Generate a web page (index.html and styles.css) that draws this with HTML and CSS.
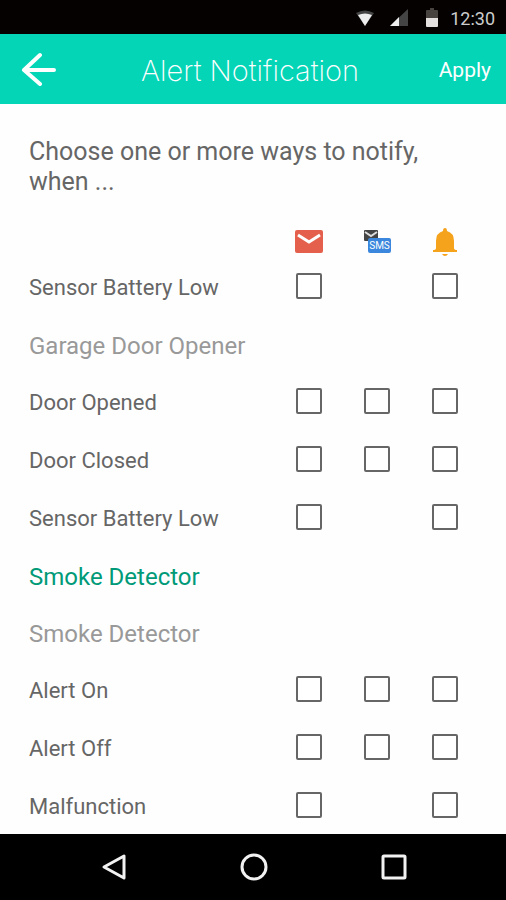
FILE: index.html
```html
<!DOCTYPE html>
<html lang="en">
<head>
<meta charset="utf-8">
<meta name="viewport" content="width=device-width, initial-scale=1">
<title>Alert Notification</title>
<link rel="stylesheet" href="styles.css">
</head>
<body>
<div class="status">
  <svg width="18" height="18" viewBox="0 0 18 18" aria-hidden="true"><path d="M0 4Q9-1 18 4L9 17z" fill="#444"/><path d="M2 6Q9 3 16 6L9 17z" fill="#eee"/></svg>
  <svg class="signal" width="18" height="18" viewBox="0 0 18 18" aria-hidden="true"><path d="M0 17L18 0V17z" fill="#444"/><path d="M0 17L9 8V17z" fill="#eee"/></svg>
  <svg class="battery" width="12" height="20" viewBox="0 0 12 20" aria-hidden="true"><path d="M4 0H8V2H11Q12 2 12 3V10H0V3Q0 2 1 2H4z" fill="#494340"/><path d="M0 10H12V18Q12 19 11 19H1Q0 19 0 18z" fill="#e4e0df"/></svg>
  <time>12:30</time>
</div>
<header class="bar">
  <button class="back" type="button" aria-label="Back"><svg width="36" height="34" viewBox="0 0 36 34" aria-hidden="true"><path d="M19 3L3 18L19 32M3 18H33" fill="none" stroke="#fff" stroke-width="4" stroke-linecap="round" stroke-linejoin="round"/></svg></button>
  <h1>Alert Notification</h1>
  <button class="apply" type="button">Apply</button>
</header>
<main>
  <p class="intro">Choose one or more ways to notify, when ...</p>
  <table>
    <thead>
      <tr>
        <td></td>
        <th class="way" scope="col" aria-label="Email"><svg width="28" height="24" viewBox="0 0 28 24" aria-hidden="true"><rect width="28" height="23" rx="2" fill="#e4604c"/><path d="M3 5L14 12L25 5" fill="none" stroke="#fff" stroke-width="3"/></svg></th>
        <th class="way" scope="col" aria-label="SMS"><svg width="28" height="24" viewBox="0 0 28 24" aria-hidden="true"><rect x="1" width="14" height="11" rx="1" fill="#444"/><path d="M2 2L8 6L14 2" fill="none" stroke="#ddd" stroke-width="2"/><rect x="5" y="8" width="23" height="15" rx="2" fill="#3b87dd"/><text class="sms" x="16.500" y="19" text-anchor="middle">SMS</text></svg></th>
        <th class="way" scope="col" aria-label="Push"><svg width="24" height="29" viewBox="0 0 24 29" aria-hidden="true"><path d="M12 0Q14 0 14 3Q21 5 21 13V20Q21 22 24 22V24H0V22Q3 22 3 20V13Q3 5 10 3Q10 0 12 0zM9 26H15Q14 28 12 28T9 26z" fill="#f5a21d"/></svg></th>
      </tr>
    </thead>
    <tbody>
      <tr><th scope="row">Sensor Battery Low</th><td><input type="checkbox" aria-label="Sensor Battery Low, email"></td><td></td><td><input type="checkbox" aria-label="Sensor Battery Low, push"></td></tr>
      <tr class="device"><th scope="rowgroup" colspan="4">Garage Door Opener</th></tr>
      <tr><th scope="row">Door Opened</th><td><input type="checkbox" aria-label="Door Opened, email"></td><td><input type="checkbox" aria-label="Door Opened, SMS"></td><td><input type="checkbox" aria-label="Door Opened, push"></td></tr>
      <tr><th scope="row">Door Closed</th><td><input type="checkbox" aria-label="Door Closed, email"></td><td><input type="checkbox" aria-label="Door Closed, SMS"></td><td><input type="checkbox" aria-label="Door Closed, push"></td></tr>
      <tr><th scope="row">Sensor Battery Low</th><td><input type="checkbox" aria-label="Garage Sensor Battery Low, email"></td><td></td><td><input type="checkbox" aria-label="Garage Sensor Battery Low, push"></td></tr>
      <tr class="category"><th scope="rowgroup" colspan="4">Smoke Detector</th></tr>
      <tr class="device"><th scope="rowgroup" colspan="4">Smoke Detector</th></tr>
      <tr><th scope="row">Alert On</th><td><input type="checkbox" aria-label="Alert On, email"></td><td><input type="checkbox" aria-label="Alert On, SMS"></td><td><input type="checkbox" aria-label="Alert On, push"></td></tr>
      <tr><th scope="row">Alert Off</th><td><input type="checkbox" aria-label="Alert Off, email"></td><td><input type="checkbox" aria-label="Alert Off, SMS"></td><td><input type="checkbox" aria-label="Alert Off, push"></td></tr>
      <tr><th scope="row">Malfunction</th><td><input type="checkbox" aria-label="Malfunction, email"></td><td></td><td><input type="checkbox" aria-label="Malfunction, push"></td></tr>
    </tbody>
  </table>
</main>
<nav class="system" aria-label="System">
  <button type="button" aria-label="Back"><svg width="28" height="28" viewBox="0 0 28 28" aria-hidden="true"><path d="M24 3V25L4 14z"/></svg></button>
  <button type="button" aria-label="Home"><svg width="28" height="28" viewBox="0 0 28 28" aria-hidden="true"><circle cx="14" cy="14" r="12"/></svg></button>
  <button type="button" aria-label="Recent apps"><svg width="28" height="28" viewBox="0 0 28 28" aria-hidden="true"><rect x="3" y="3" width="22" height="22" rx="1"/></svg></button>
</nav>
</body>
</html>
```
FILE: styles.css
```css
* {
  box-sizing: border-box;
}

body {
  margin: 0;
  min-height: 100vh;
  display: flex;
  flex-direction: column;
  background: #fefefe;
  color: #666;
  font-family: Roboto, sans-serif;
}

button {
  padding: 0;
  border: 0;
  background: none;
  color: #fff;
  font: inherit;
}

svg {
  display: block;
}

.status {
  height: 34px;
  padding: 2px 11px 0 0;
  display: flex;
  align-items: center;
  justify-content: flex-end;
  background: #050101;
  color: #ccc;
  font-size: 18px;
}

.signal {
  margin-left: 16px;
}

.battery {
  margin: 0 12px 0 18px;
}

.bar {
  height: 70px;
  padding: 0 15px 0 9px;
  display: grid;
  grid-template-columns: 1fr auto 1fr;
  align-items: center;
  background: #04d5b7;
  color: #fff;
}

.bar h1 {
  margin: 0;
  padding-top: 2px;
  font-family: Inter, sans-serif;
  font-size: 29px;
  font-weight: 200;
}

.back {
  justify-self: start;
  margin-left: 12px;
}

.apply {
  justify-self: end;
  padding-top: 2px;
  font-size: 21px;
}

main {
  flex: 1;
  padding: 33px 27px 0 29px;
}

.intro {
  margin: 0 0 30px;
  font-size: 25px;
  line-height: 30px;
}

table {
  width: 100%;
  border-collapse: collapse;
}

th,
td {
  padding: 0;
  height: 58px;
  vertical-align: middle;
}

th {
  font-size: 22px;
  font-weight: 400;
  text-align: left;
}

td {
  text-align: center;
}

tbody th {
  padding-top: 2px;
}

thead th,
thead td {
  height: 30px;
}

.way {
  width: 68px;
}

.way svg {
  margin: 0 auto;
}

.sms {
  fill: #fff;
  font-size: 10px;
}

.device th,
.category th {
  height: 57px;
  padding-top: 4px;
  font-size: 24px;
}

.device {
  color: #999;
}

.category {
  color: #009a78;
}

input {
  appearance: none;
  display: block;
  width: 26px;
  height: 26px;
  margin: 0 auto;
  border: 2px solid #666;
  border-radius: 2px;
  background: #fff;
}

.system {
  height: 66px;
  padding: 0 42px 0 44px;
  display: flex;
  align-items: center;
  background: #000;
}

.system button {
  flex: 1;
  display: flex;
  justify-content: center;
}

.system svg {
  fill: none;
  stroke: #f2f2f2;
  stroke-width: 3px;
  stroke-linejoin: round;
}
```
